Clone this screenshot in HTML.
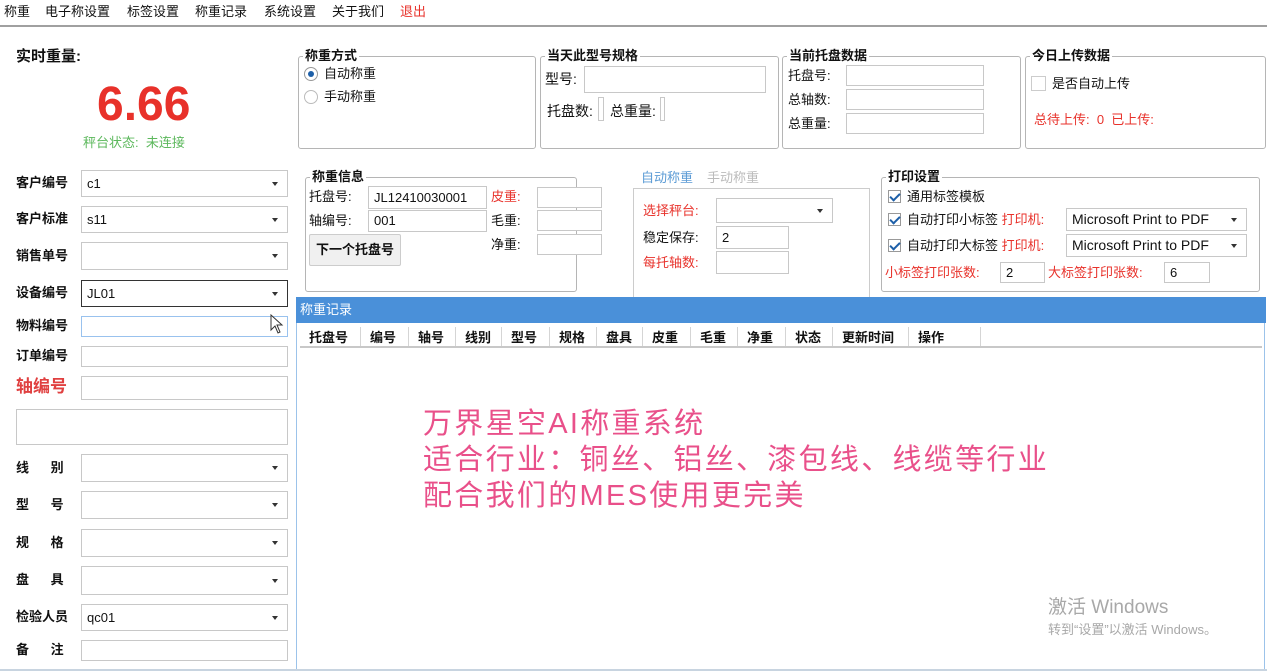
<!DOCTYPE html>
<html><head><meta charset="utf-8">
<style>
*{box-sizing:border-box;margin:0;padding:0}
body{width:1267px;height:671px;overflow:hidden;background:#fff;position:relative;font-family:"Liberation Sans","Noto Sans CJK SC",sans-serif;font-size:13px;color:#111;line-height:1.2}
.a{position:absolute;white-space:nowrap}
.in{position:absolute;border:1px solid #c8c8c8;background:#fff;font-size:13px;padding-left:5px;display:flex;align-items:center}
.cb::after{content:"";position:absolute;right:9px;top:50%;margin-top:-2px;border-left:3px solid transparent;border-right:3px solid transparent;border-top:4px solid #333}
.gb{position:absolute;border:1px solid #b5b5b5;border-radius:3px}
.gt{position:absolute;top:-9px;left:4px;background:#fff;padding:0 2px;font-weight:bold;font-size:13px;line-height:16px}
.lb{position:absolute;left:16px;font-weight:bold;font-size:13px;white-space:nowrap}
.red{color:#e8322b}
.chk{position:absolute;width:13px;height:13px;border:1px solid #999;background:#fff}
.chk.on::after{content:"";position:absolute;left:3px;top:0px;width:4px;height:8px;border-right:2px solid #1d5fa8;border-bottom:2px solid #1d5fa8;transform:rotate(45deg)}
.th{position:absolute;top:327px;height:21px;font-weight:bold;font-size:13px;line-height:21px;padding-left:9px;border-right:1px solid #d5d5d5}
</style></head><body>
<!-- menu -->
<div class="a" style="left:4px;top:4px">称重</div>
<div class="a" style="left:45px;top:4px">电子称设置</div>
<div class="a" style="left:127px;top:4px">标签设置</div>
<div class="a" style="left:195px;top:4px">称重记录</div>
<div class="a" style="left:264px;top:4px">系统设置</div>
<div class="a" style="left:332px;top:4px">关于我们</div>
<div class="a red" style="left:400px;top:4px">退出</div>
<div class="a" style="left:0;top:25px;width:1267px;height:2px;background:#a0a0a0"></div>

<div class="a" style="left:16px;top:48px;font-weight:bold;font-size:15px">实时重量:</div>
<div class="a" style="left:97px;top:78px;font-weight:bold;font-size:48px;color:#e8312a;line-height:54px">6.66</div>
<div class="a" style="left:83px;top:135px;color:#5cb85c;font-size:13px">秤台状态:&nbsp;&nbsp;未连接</div>

<!-- top groups -->
<div class="gb" style="left:298px;top:56px;width:238px;height:93px"><div class="gt">称重方式</div></div>
<div class="a" style="left:304px;top:67px;width:14px;height:14px;border:1px solid #999;border-radius:50%"><div style="position:absolute;left:3px;top:3px;width:6px;height:6px;border-radius:50%;background:#1d5fa8"></div></div>
<div class="a" style="left:324px;top:66px">自动称重</div>
<div class="a" style="left:304px;top:90px;width:14px;height:14px;border:1px solid #bbb;border-radius:50%"></div>
<div class="a" style="left:324px;top:89px">手动称重</div>

<div class="gb" style="left:540px;top:56px;width:239px;height:93px"><div class="gt">当天此型号规格</div></div>
<div class="a" style="left:545px;top:71px;font-size:14px">型号:</div>
<div class="in" style="left:584px;top:66px;width:182px;height:27px"></div>
<div class="a" style="left:547px;top:103px;font-size:14px">托盘数:</div>
<div class="in" style="left:598px;top:97px;width:6px;height:24px;padding:0"></div>
<div class="a" style="left:610px;top:103px;font-size:14px">总重量:</div>
<div class="in" style="left:660px;top:97px;width:5px;height:24px;padding:0"></div>

<div class="gb" style="left:782px;top:56px;width:239px;height:93px"><div class="gt">当前托盘数据</div></div>
<div class="a" style="left:788px;top:68px">托盘号:</div>
<div class="in" style="left:846px;top:65px;width:138px;height:21px"></div>
<div class="a" style="left:788px;top:92px">总轴数:</div>
<div class="in" style="left:846px;top:89px;width:138px;height:21px"></div>
<div class="a" style="left:788px;top:116px">总重量:</div>
<div class="in" style="left:846px;top:113px;width:138px;height:21px"></div>

<div class="gb" style="left:1025px;top:56px;width:241px;height:93px"><div class="gt">今日上传数据</div></div>
<div class="chk" style="left:1031px;top:76px;width:15px;height:15px;border-color:#ccc"></div>
<div class="a" style="left:1052px;top:76px">是否自动上传</div>
<div class="a red" style="left:1034px;top:112px">总待上传:&nbsp; 0&nbsp; 已上传:</div>

<!-- left form -->
<div class="lb" style="top:175px">客户编号</div><div class="in cb" style="left:81px;top:170px;width:207px;height:27px">c1</div>
<div class="lb" style="top:211px">客户标准</div><div class="in cb" style="left:81px;top:206px;width:207px;height:27px">s11</div>
<div class="lb" style="top:248px">销售单号</div><div class="in cb" style="left:81px;top:242px;width:207px;height:28px"></div>
<div class="lb" style="top:285px">设备编号</div><div class="in cb" style="left:81px;top:280px;width:207px;height:27px;border-color:#333">JL01</div>
<div class="lb" style="top:318px">物料编号</div><div class="in" style="left:81px;top:316px;width:207px;height:21px;border-color:#99c2ee"></div>
<svg class="a" style="left:270px;top:314px" width="14" height="20" viewBox="0 0 14 20"><path d="M1 1 L1 16 L5 12 L8 19 L10 18 L7 11 L12 11 Z" fill="#fff" stroke="#333" stroke-width="1"/></svg>
<div class="lb" style="top:348px">订单编号</div><div class="in" style="left:81px;top:346px;width:207px;height:21px"></div>
<div class="lb red" style="top:377px;font-size:17px;color:#e04040">轴编号</div><div class="in" style="left:81px;top:376px;width:207px;height:24px"></div>
<div class="in" style="left:16px;top:409px;width:272px;height:36px"></div>
<div class="lb" style="top:460px">线&nbsp;&nbsp;&nbsp;&nbsp;&nbsp;&nbsp;别</div><div class="in cb" style="left:81px;top:454px;width:207px;height:28px"></div>
<div class="lb" style="top:497px">型&nbsp;&nbsp;&nbsp;&nbsp;&nbsp;&nbsp;号</div><div class="in cb" style="left:81px;top:491px;width:207px;height:28px"></div>
<div class="lb" style="top:535px">规&nbsp;&nbsp;&nbsp;&nbsp;&nbsp;&nbsp;格</div><div class="in cb" style="left:81px;top:529px;width:207px;height:28px"></div>
<div class="lb" style="top:572px">盘&nbsp;&nbsp;&nbsp;&nbsp;&nbsp;&nbsp;具</div><div class="in cb" style="left:81px;top:566px;width:207px;height:29px"></div>
<div class="lb" style="top:609px">检验人员</div><div class="in cb" style="left:81px;top:604px;width:207px;height:27px">qc01</div>
<div class="lb" style="top:642px">备&nbsp;&nbsp;&nbsp;&nbsp;&nbsp;&nbsp;注</div><div class="in" style="left:81px;top:640px;width:207px;height:21px"></div>

<!-- 称重信息 -->
<div class="gb" style="left:305px;top:177px;width:272px;height:115px"><div class="gt">称重信息</div></div>
<div class="a" style="left:309px;top:189px">托盘号:</div>
<div class="in" style="left:368px;top:186px;width:119px;height:23px">JL12410030001</div>
<div class="a" style="left:309px;top:213px">轴编号:</div>
<div class="in" style="left:368px;top:210px;width:119px;height:22px">001</div>
<div class="a" style="left:309px;top:234px;width:92px;height:32px;border:1px solid #ccc;border-radius:2px;background:#f0f0f0;font-weight:bold;line-height:30px;text-align:center">下一个托盘号</div>
<div class="a red" style="left:491px;top:189px">皮重:</div><div class="in" style="left:537px;top:187px;width:65px;height:21px"></div>
<div class="a" style="left:491px;top:213px">毛重:</div><div class="in" style="left:537px;top:210px;width:65px;height:21px"></div>
<div class="a" style="left:491px;top:237px">净重:</div><div class="in" style="left:537px;top:234px;width:65px;height:21px"></div>

<!-- tabs -->
<div class="a" style="left:641px;top:170px;color:#5b9bd5">自动称重</div>
<div class="a" style="left:707px;top:170px;color:#bbb">手动称重</div>
<div class="a" style="left:633px;top:188px;width:237px;height:110px;border:1px solid #ccc"></div>
<div class="a red" style="left:643px;top:203px">选择秤台:</div>
<div class="in cb" style="left:716px;top:198px;width:117px;height:25px"></div>
<div class="a" style="left:643px;top:230px">稳定保存:</div>
<div class="in" style="left:716px;top:226px;width:73px;height:23px">2</div>
<div class="a red" style="left:643px;top:255px">每托轴数:</div>
<div class="in" style="left:716px;top:251px;width:73px;height:23px"></div>

<!-- 打印设置 -->
<div class="gb" style="left:881px;top:177px;width:379px;height:115px"><div class="gt">打印设置</div></div>
<div class="chk on" style="left:888px;top:190px"></div><div class="a" style="left:907px;top:189px">通用标签模板</div>
<div class="chk on" style="left:888px;top:213px"></div><div class="a" style="left:907px;top:212px">自动打印小标签 <span class="red">打印机:</span></div>
<div class="in cb" style="left:1066px;top:208px;width:181px;height:23px;font-size:14px">Microsoft Print to PDF</div>
<div class="chk on" style="left:888px;top:239px"></div><div class="a" style="left:907px;top:238px">自动打印大标签 <span class="red">打印机:</span></div>
<div class="in cb" style="left:1066px;top:234px;width:181px;height:23px;font-size:14px">Microsoft Print to PDF</div>
<div class="a red" style="left:885px;top:265px">小标签打印张数:</div>
<div class="in" style="left:1000px;top:262px;width:45px;height:21px">2</div>
<div class="a red" style="left:1048px;top:265px">大标签打印张数:</div>
<div class="in" style="left:1164px;top:262px;width:46px;height:21px">6</div>

<!-- records -->
<div class="a" style="left:296px;top:297px;width:1px;height:374px;background:#9cc3ea"></div>
<div class="a" style="left:1264px;top:297px;width:1px;height:374px;background:#9cc3ea"></div>
<div class="a" style="left:296px;top:297px;width:970px;height:26px;background:#4a90d9;color:#fff;line-height:26px;padding-left:4px;font-size:13px">称重记录</div>
<div class="th" style="left:300px;width:61px">托盘号</div>
<div class="th" style="left:361px;width:48px">编号</div>
<div class="th" style="left:409px;width:47px">轴号</div>
<div class="th" style="left:456px;width:46px">线别</div>
<div class="th" style="left:502px;width:48px">型号</div>
<div class="th" style="left:550px;width:47px">规格</div>
<div class="th" style="left:597px;width:46px">盘具</div>
<div class="th" style="left:643px;width:48px">皮重</div>
<div class="th" style="left:691px;width:47px">毛重</div>
<div class="th" style="left:738px;width:48px">净重</div>
<div class="th" style="left:786px;width:47px">状态</div>
<div class="th" style="left:833px;width:76px">更新时间</div>
<div class="th" style="left:909px;width:72px">操作</div>
<div class="a" style="left:300px;top:346px;width:962px;height:2px;background:#c8c8c8"></div>

<div class="a" style="left:423px;top:406px;color:#e9508a;font-size:29px;line-height:36px;letter-spacing:2.3px">万界星空AI称重系统<br>适合行业：铜丝、铝丝、漆包线、线缆等行业<br>配合我们的MES使用更完美</div>

<div class="a" style="left:1048px;top:597px;color:#a8a8a8;font-size:19px">激活 Windows</div>
<div class="a" style="left:1048px;top:622px;color:#a8a8a8;font-size:13px">转到“设置”以激活 Windows。</div>
<div class="a" style="left:0;top:669px;width:1267px;height:2px;background:#c8d4e0"></div>
</body></html>
